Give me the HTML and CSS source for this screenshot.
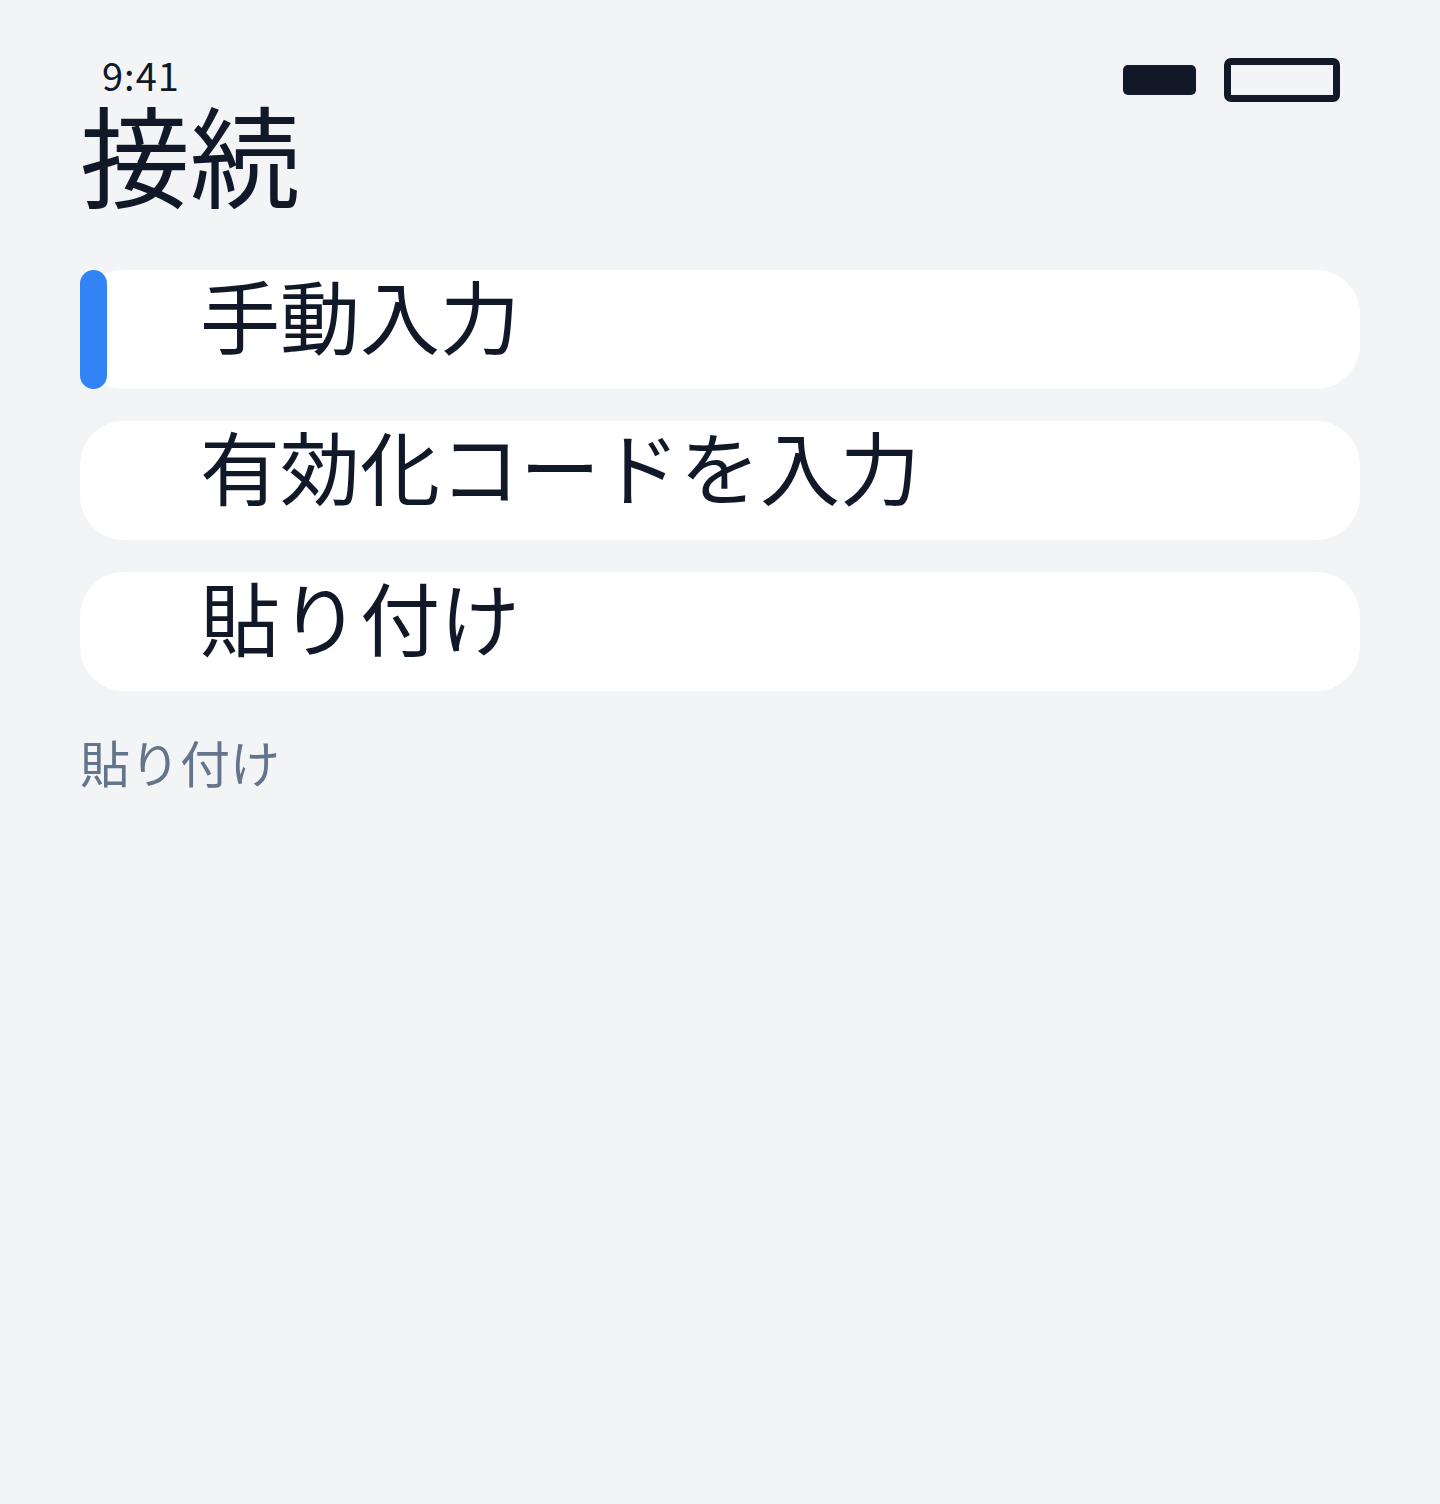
FILE: index.html
```html
<!DOCTYPE html>
<html lang="ja">
<head>
<meta charset="utf-8">
<title>接続</title>
<link rel="stylesheet" href="styles.css">
</head>
<body>
<div class="screen">
  <div class="status-bar">
    <span class="time">9:41</span>
    <div class="status-icons">
      <span class="signal"></span>
      <span class="battery"></span>
    </div>
  </div>
  <h1 class="title">接続</h1>
  <ul class="options">
    <li class="option selected"><span class="indicator"></span><span class="label">手動入力</span></li>
    <li class="option"><span class="label">有効化コードを入力</span></li>
    <li class="option"><span class="label">貼り付け</span></li>
  </ul>
  <p class="caption">貼り付け</p>
</div>
</body>
</html>
```

FILE: styles.css
```css
* { box-sizing: border-box; }
html, body {
  margin: 0;
  padding: 0;
  background: #f3f4f6;
}
body {
  font-family: "Noto Sans CJK JP", "Noto Sans", sans-serif;
  color: #111827;
}
.screen {
  padding: 54px 80px 0;
  min-height: 1504px;
}
.status-bar {
  display: flex;
  justify-content: space-between;
  align-items: flex-start;
  padding: 0 20px 0 22px;
  height: 48px;
}
.time {
  font-size: 38px;
  line-height: 1;
  letter-spacing: 1px;
  color: #111827;
  margin-top: 2px;
}
.status-icons {
  display: flex;
  align-items: center;
  gap: 28px;
  height: 44px;
  margin-top: 4px;
}
.signal {
  display: block;
  width: 73px;
  height: 30px;
  background: #111827;
  border-radius: 5px;
}
.battery {
  display: block;
  width: 116px;
  height: 44px;
  border: 7px solid #111827;
  border-radius: 7px;
}
.title {
  margin: -5px 0 0;
  font-size: 110px;
  font-weight: 400;
  line-height: 1;
}
.options {
  list-style: none;
  margin: 63px 0 0;
  padding: 0;
  display: flex;
  flex-direction: column;
  gap: 32px;
}
.option {
  position: relative;
  background: #ffffff;
  border-radius: 44px;
  height: 119px;
  padding-left: 120px;
  display: flex;
  align-items: center;
}
.label {
  font-size: 80px;
  line-height: 1;
  margin-top: -34px;
}
.indicator {
  position: absolute;
  left: 0;
  top: 0;
  bottom: 0;
  width: 27px;
  border-radius: 14px;
  background: #3283f6;
}
.caption {
  margin: 40px 0 0;
  font-size: 50px;
  line-height: 1.2;
  color: #64748b;
}
```
